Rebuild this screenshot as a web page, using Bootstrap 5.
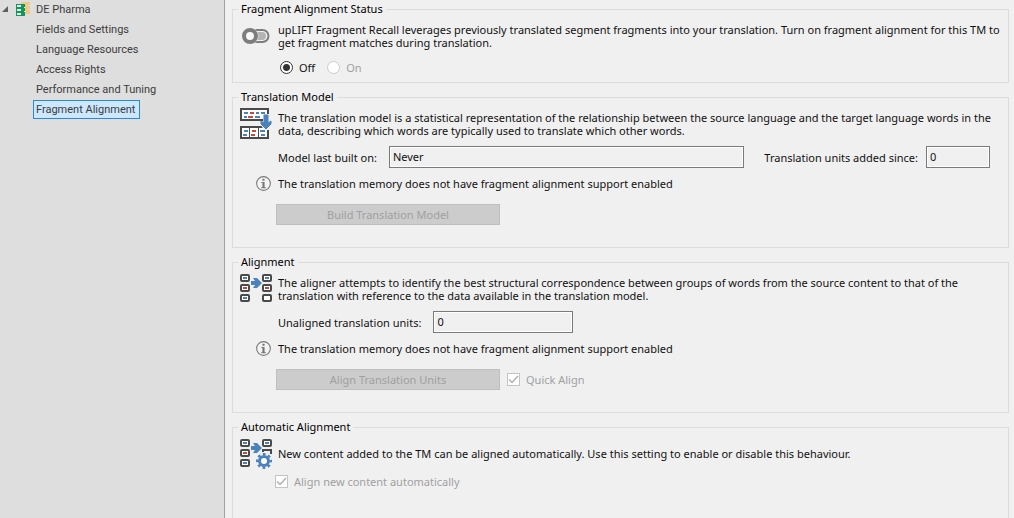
<!DOCTYPE html>
<html lang="en">
<head>
<meta charset="utf-8">
<meta name="viewport" content="width=device-width, initial-scale=1">
<title>DE Pharma - Fragment Alignment</title>
<link href="https://cdn.jsdelivr.net/npm/bootstrap@5.3.0/dist/css/bootstrap.min.css" rel="stylesheet">
<style>
  body { font: 11px/13px "Noto Sans", "Open Sans", sans-serif; color: #101010; background: #f0f0f0; }
  .shell { height: 100vh; }
  .tree { width: 225px; background: #dedede; border-right: 1px solid #a0a0a0; font: 11px/20px Roboto, "Open Sans", sans-serif; }
  .tree a { color: #3c3c3c; text-decoration: none; }
  .tree-root { height: 19px; }
  .tree-root svg { display: block; }
  .tree-items { padding-left: 33px; }
  .tree-items li { height: 20px; display: flex; align-items: center; }
  .tree-items a { border: 1px solid transparent; padding: 0 2px; line-height: 17px; }
  .tree-items a.active { background: #cce8ff; border-color: #2b88d8; padding-right: 4px; }
  .main { min-width: 0; padding: 1px 5px 0 7px; }
  .group { border: 1px solid #dcdcdc; margin: 0 0 6px; padding: 0 18px 22px 5px; }
  .group-status { padding-bottom: 8px; }
  .group legend { float: none; width: auto; margin: 0; padding: 0 3px; font-size: 11px; line-height: 16px; color: #000; }
  .side-icon { width: 32px; margin: 0 6px 0 2px; padding-top: 4px; }
  .side-icon svg { display: block; }
  .intro { padding-top: 6px; }
  .fields { padding: 9px 0 0 40px; }
  .fields .box { margin-left: 12px; }
  .fields .box + label { margin-left: 20px; }
  .fields .w-units { margin-left: 8px; }
  .actions { padding: 13px 0 0 38px; gap: 7px; }
  .choices { padding: 12px 0 0 42px; gap: 12px; }
  .auto { padding: 4px 0 24px 37px; }
  .option { display: flex; align-items: center; gap: 6px; }
  .btn-flat, .btn-flat:disabled { width: 224px; height: 21px; padding: 0; border: 1px solid #bfbfbf; border-radius: 0; background: #ccc; color: #a0a0a0; font-size: 11px; line-height: 19px; opacity: 1; }
  .box, .box:read-only { height: 22px; padding: 0 3px 2px; border: 1px solid #7a7a7a; border-radius: 0; background: #f0f0f0; box-shadow: inset 0 0 0 1px #fff; color: #101010; font-size: 11px; line-height: 18px; }
  .muted { color: #a0a0a0; }
  .radio { appearance: none; width: 13px; height: 13px; margin: 0; border: 1px solid #333; border-radius: 50%; background: #fff; }
  .radio:checked { background: radial-gradient(circle, #333 0 3px, #fff 4px); }
  .radio:disabled { border-color: #ccc; }
  .tick { appearance: none; width: 13px; height: 13px; margin: 0; border: 1px solid #c4c4c4; background: #fff; }
  .tick:checked { background: #fff url("data:image/svg+xml,%3Csvg xmlns='http://www.w3.org/2000/svg' viewBox='0 0 11 11'%3E%3Cpath d='M1 5.500 4 8.500 10 2' fill='none' stroke='%23b0b0b0' stroke-width='1.500'/%3E%3C/svg%3E"); }
  .w-units { width: 64px; }
  .w-unaligned { width: 140px; }
  .note { margin-top: 7px; padding-left: 18px; gap: 7px; height: 16px; }
</style>
</head>
<body>
<svg class="d-none" xmlns="http://www.w3.org/2000/svg">
  <symbol id="info" viewBox="0 0 14 14">
    <circle cx="7" cy="7" r="6.400" fill="#f4f4f4" stroke="#777" stroke-width="1"/>
    <path d="M6 2.500h2v2H6zM5 5.500h3v5h1.200v1H4.800v-1H6v-4H5z" fill="#777"/>
  </symbol>
  <symbol id="cell" viewBox="0 0 10 8">
    <rect x="1" y="1" width="8" height="6" rx="1" fill="#fff" stroke="#4a4a4a" stroke-width="2"/>
  </symbol>
  <symbol id="pairs" viewBox="0 0 32 20">
    <use href="#cell" width="10" height="8"/><path d="M3 3h4v2H3z" fill="#4a82bd"/>
    <use href="#cell" y="10" width="10" height="8"/><path d="M3 13h4v2H3z" fill="#c8493f"/>
    <use href="#cell" x="22" width="10" height="8"/><path d="M25 3h4v2h-4z" fill="#4a82bd"/>
    <path d="M11 7h4l-2-3h4l5 5-5 5h-4l2-3h-4z" fill="#4a82bd"/>
  </symbol>
</svg>
<div class="shell d-flex overflow-hidden">
  <nav class="tree flex-shrink-0" aria-label="Settings">
    <div class="tree-root d-flex align-items-center">
      <svg width="36" height="19" viewBox="0 0 36 19" aria-hidden="true">
        <path d="M8 6v6H2z" fill="#606060"/>
        <path d="M21 2h9v12h-5V5h-4z" fill="#f0c987"/><path d="M28 5h2v1h-2zM28 9h2v1h-2z" fill="#dedede"/>
        <path d="M16 4h9v12h-9z" fill="#14965a"/>
        <path d="M17 5h4v2h-4zM17 9h4v2h-4zM17 13h4v2h-4zM24 7h1v1h-1zM24 11h1v1h-1z" fill="#e6f3ec"/>
      </svg>
      <a href="#">DE Pharma</a>
    </div>
    <ul class="tree-items list-unstyled m-0">
      <li><a href="#">Fields and Settings</a></li>
      <li><a href="#">Language Resources</a></li>
      <li><a href="#">Access Rights</a></li>
      <li><a href="#">Performance and Tuning</a></li>
      <li><a href="#" class="active" aria-current="page">Fragment Alignment</a></li>
    </ul>
  </nav>

  <main class="main flex-grow-1">
    <fieldset class="group group-status">
      <legend>Fragment Alignment Status</legend>
      <div class="d-flex">
        <div class="side-icon">
          <svg width="32" height="28" viewBox="0 0 32 28" aria-hidden="true">
            <path d="M12 8h10.500a7 7 0 0 1 0 14H12z" fill="#7d7d7d"/>
            <path d="M12 10h10.500a5 5 0 0 1 0 10H12z" fill="#f0f0f0"/>
            <path d="M12 11h10a4 4 0 0 1 0 8H12z" fill="#b4b4b4"/>
            <circle cx="10" cy="15" r="8.500" fill="#f0f0f0"/>
            <circle cx="10" cy="15" r="6" fill="#f8f8f8" stroke="#7d7d7d" stroke-width="4"/>
          </svg>
        </div>
        <div class="intro text-nowrap">upLIFT Fragment Recall leverages previously translated segment fragments into your translation. Turn on fragment alignment for this TM to<br>get fragment matches during translation.</div>
      </div>
      <div class="choices d-flex">
        <label class="option"><input class="radio" type="radio" name="status" checked>Off</label>
        <label class="option muted"><input class="radio" type="radio" name="status" disabled>On</label>
      </div>
    </fieldset>

    <fieldset class="group">
      <legend>Translation Model</legend>
      <div class="d-flex align-items-start">
        <div class="side-icon">
          <svg width="32" height="28" viewBox="0 0 32 28" overflow="visible" aria-hidden="true">
            <path d="M1 0h27v11H1zM1 18h27v11H1z" fill="#fff" stroke="#4a4a4a" stroke-width="2"/>
            <path d="M9.500 19v9M18.500 19v9" stroke="#4a4a4a"/>
            <path d="M4 3h4v2H4zM16 3h3v2h-3zM21 3h4v2h-4zM4 7h3v2H4zM15 7h5v2h-5zM4 21h4v2H4zM3 25h4v2H3zM20 21h5v2h-5zM21 25h4v2h-4z" fill="#4a82bd"/>
            <path d="M10 3h4v2h-4zM8 7h5v2H8zM12 21h4v2h-4zM11 25h4v2h-4z" fill="#c8493f"/>
            <path d="M23 5h7v8h3l-3 8h-6l-5-8h4z" fill="#f0f0f0"/>
            <path d="M24 6h4v8l3-2v3l-5 5-5-5v-3l3 2z" fill="#4a82bd" stroke="#4a82bd"/>
          </svg>
        </div>
        <div class="intro text-nowrap">The translation model is a statistical representation of the relationship between the source language and the target language words in the<br>data, describing which words are typically used to translate which other words.</div>
      </div>
      <div class="fields d-flex align-items-center">
        <label for="built" class="text-nowrap">Model last built on:</label>
        <input id="built" class="box flex-grow-1" type="text" value="Never" readonly>
        <label for="added" class="text-nowrap">Translation units added since:</label>
        <input id="added" class="box w-units" type="text" value="0" readonly>
      </div>
      <div class="note d-flex align-items-center">
        <svg width="15" height="15" aria-hidden="true"><use href="#info"/></svg>
        <span>The translation memory does not have fragment alignment support enabled</span>
      </div>
      <div class="actions d-flex"><button class="btn btn-flat" type="button" disabled>Build Translation Model</button></div>
    </fieldset>

    <fieldset class="group">
      <legend>Alignment</legend>
      <div class="d-flex">
        <div class="side-icon">
          <svg width="32" height="28" viewBox="0 0 32 28" overflow="visible" aria-hidden="true">
            <use href="#pairs" width="32" height="20"/>
            <use href="#cell" y="20" width="10" height="8"/><path d="M3 23h4v2H3z" fill="#4a82bd"/>
            <use href="#cell" x="22" y="10" width="10" height="8"/><path d="M25 13h4v2h-4z" fill="#c8493f"/>
            <use href="#cell" x="22" y="20" width="10" height="8"/>
          </svg>
        </div>
        <div class="intro text-nowrap">The aligner attempts to identify the best structural correspondence between groups of words from the source content to that of the<br>translation with reference to the data available in the translation model.</div>
      </div>
      <div class="fields d-flex align-items-center">
        <label for="unaligned">Unaligned translation units:</label>
        <input id="unaligned" class="box w-unaligned" type="text" value="0" readonly>
      </div>
      <div class="note d-flex align-items-center">
        <svg width="15" height="15" aria-hidden="true"><use href="#info"/></svg>
        <span>The translation memory does not have fragment alignment support enabled</span>
      </div>
      <div class="actions d-flex align-items-center">
        <button class="btn btn-flat" type="button" disabled>Align Translation Units</button>
        <label class="option muted"><input class="tick" type="checkbox" checked disabled>Quick Align</label>
      </div>
    </fieldset>

    <fieldset class="group">
      <legend>Automatic Alignment</legend>
      <div class="d-flex align-items-center">
        <div class="side-icon">
          <svg width="32" height="32" viewBox="0 0 32 32" aria-hidden="true">
            <use href="#pairs" width="32" height="20"/>
            <use href="#cell" y="20" width="10" height="8"/><path d="M3 23h4v2H3z" fill="#4a82bd"/>
            <path d="M23 13v-2h8v4" fill="none" stroke="#4a4a4a" stroke-width="2"/>
            <circle cx="24" cy="22" r="8.500" fill="#f0f0f0"/>
            <circle cx="24" cy="22" r="4.500" fill="#fff" stroke="#4a82bd" stroke-width="3"/>
            <circle cx="24" cy="22" r="6.700" fill="none" stroke="#4a82bd" stroke-width="2.600" stroke-dasharray="2.630" stroke-dashoffset="1.310"/>
          </svg>
        </div>
        <div class="text-nowrap">New content added to the TM can be aligned automatically. Use this setting to enable or disable this behaviour.</div>
      </div>
      <div class="auto d-flex">
        <label class="option muted"><input class="tick" type="checkbox" checked disabled>Align new content automatically</label>
      </div>
    </fieldset>
  </main>
</div>
<script src="https://cdn.jsdelivr.net/npm/bootstrap@5.3.0/dist/js/bootstrap.bundle.min.js"></script>
</body>
</html>
